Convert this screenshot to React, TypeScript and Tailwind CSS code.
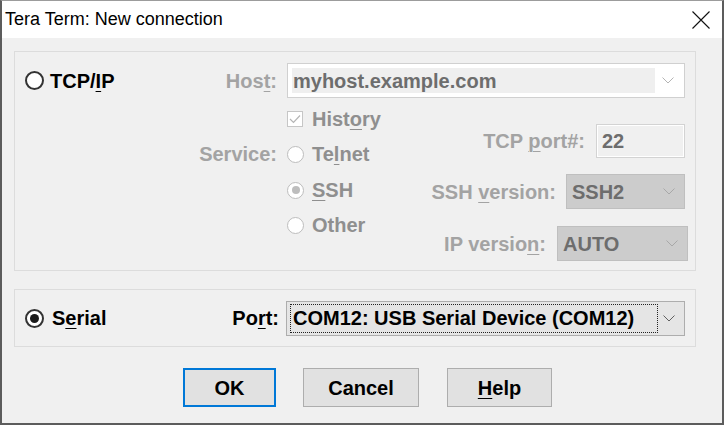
import React from "react";

const GRAY = "text-[#a3a3a3]";

function Chevron({ color = "#a8a8a8" }: { color?: string }) {
  return (
    <svg width="12" height="7" viewBox="0 0 12 7" fill="none">
      <path d="M0.5 0.5L6 6L11.5 0.5" stroke={color} strokeWidth="1" />
    </svg>
  );
}

function Radio({ checked = false }: { checked?: boolean }) {
  return (
    <span className="w-[19px] h-[19px] rounded-full border-2 border-[#333333] bg-white flex items-center justify-center shrink-0">
      {checked && <span className="w-[9px] h-[9px] rounded-full bg-[#1a1a1a]" />}
    </span>
  );
}

function DimRadio({ checked = false }: { checked?: boolean }) {
  return (
    <span className="w-[17px] h-[17px] rounded-full border border-[#bdbdbd] bg-white flex items-center justify-center shrink-0">
      {checked && <span className="w-[8px] h-[8px] rounded-full bg-[#bdbdbd]" />}
    </span>
  );
}

function U({ children }: { children: React.ReactNode }) {
  return <span className="underline underline-offset-[3px] decoration-1">{children}</span>;
}

function DimCombo({ value, width }: { value: string; width: string }) {
  return (
    <div className={`${width} h-[35px] bg-[#cccccc] border border-[#bfbfbf] flex items-center justify-between pl-[5px] pr-[9px] text-[#6d6d6d]`}>
      <span>{value}</span>
      <Chevron />
    </div>
  );
}

export default function App() {
  return (
    <div className="w-[724px] h-[426px] bg-white font-['Liberation_Sans',Arial,sans-serif]">
      <div className="w-[724px] h-[425px] flex flex-col border-x-2 border-b-2 border-[#5c5c5c] border-t border-t-[#9c9c9c]">
        {/* title bar */}
        <div className="h-[37px] bg-white flex items-center justify-between pl-[3px] pr-[12px]">
          <span className="text-[18px] text-black">Tera Term: New connection</span>
          <svg width="18" height="18" viewBox="0 0 18 18" fill="none">
            <path d="M0.5 0.5L17.5 17.5M17.5 0.5L0.5 17.5" stroke="#111" strokeWidth="1.1" />
          </svg>
        </div>

        <div className="flex-1 bg-[#f0f0f0] pl-[12px] pt-[13px] text-[20px] font-bold text-black">
          {/* TCP/IP group */}
          <div className="w-[682px] h-[220px] border border-[#dcdcdc] pl-[10px] pt-[11px] pr-[7px]">
            <div className="flex items-center h-[35px]">
              <div className="w-[252px] flex items-center justify-between">
                <div className="flex items-center gap-[6px]">
                  <Radio />
                  <span>
                    TCP/<U>I</U>P
                  </span>
                </div>
                <span className={GRAY}>
                  Hos<U>t</U>:
                </span>
              </div>
              <div className="ml-[10px] w-[398px] h-[35px] border border-[#d0d0d0] bg-white flex items-center pl-[4px] pr-[10px]">
                <div className="w-[363px] h-[25px] bg-[#efefef] flex items-center pl-[1px] text-[#6d6d6d]">
                  myhost.example.com
                </div>
                <div className="flex-1 flex justify-end">
                  <Chevron color="#b4b4b4" />
                </div>
              </div>
            </div>

            <div className="flex">
              <div className="w-[252px] mt-[44px] h-[24px] flex items-center justify-end">
                <span className={GRAY}>Service:</span>
              </div>
              <div className="ml-[10px] w-[120px] flex flex-col text-[#8f8f8f]">
                <div className="mt-[9px] h-[24px] flex items-center gap-[9px]">
                  <span className="w-[16px] h-[16px] border border-[#c6c6c6] bg-white flex items-center justify-center">
                    <svg width="12" height="10" viewBox="0 0 12 10" fill="none">
                      <path d="M1 5L4.5 8.5L11 1.5" stroke="#b5b5b5" strokeWidth="1.2" />
                    </svg>
                  </span>
                  <span>
                    Hist<U>o</U>ry
                  </span>
                </div>
                <div className="mt-[11px] h-[24px] flex items-center gap-[8px]">
                  <DimRadio />
                  <span>
                    Te<U>l</U>net
                  </span>
                </div>
                <div className="mt-[12px] h-[24px] flex items-center gap-[8px]">
                  <DimRadio checked />
                  <span>
                    <U>S</U>SH
                  </span>
                </div>
                <div className="mt-[11px] h-[24px] flex items-center gap-[8px]">
                  <DimRadio />
                  <span>Other</span>
                </div>
              </div>
              <div className="flex-1 flex flex-col items-end">
                <div className="mt-[26px] h-[34px] flex items-center gap-[11px] mr-[3px]">
                  <span className={GRAY}>
                    TCP <U>p</U>ort#:
                  </span>
                  <div className="w-[89px] h-[34px] border border-[#d3d3d3] bg-[#f0f0f0] shadow-[inset_0_0_0_1px_#ffffff] flex items-center pl-[5px] text-[#6d6d6d]">
                    22
                  </div>
                </div>
                <div className="mt-[16px] flex items-center gap-[10px] mr-[3px]">
                  <span className={GRAY}>
                    SSH <U>v</U>ersion:
                  </span>
                  <DimCombo value="SSH2" width="w-[119px]" />
                </div>
                <div className="mt-[17px] flex items-center gap-[11px]">
                  <span className={GRAY}>
                    IP versio<U>n</U>:
                  </span>
                  <DimCombo value="AUTO" width="w-[131px]" />
                </div>
              </div>
            </div>
          </div>

          {/* Serial group */}
          <div className="mt-[18px] w-[682px] h-[58px] border border-[#dcdcdc] pl-[10px] flex items-center">
            <div className="w-[254px] flex items-center justify-between">
              <div className="flex items-center gap-[8px]">
                <Radio checked />
                <span>
                  S<U>e</U>rial
                </span>
              </div>
              <span>
                Po<U>r</U>t:
              </span>
            </div>
            <div className="ml-[7px] w-[399px] h-[35px] bg-[#e5e5e5] border border-[#adadad] flex items-center pl-[3px] pr-[9px]">
              <div className="w-[368px] h-[29px] border border-dotted border-[#222] flex items-center pl-[2px] whitespace-nowrap">
                COM12: USB Serial Device (COM12)
              </div>
              <div className="flex-1 flex justify-end">
                <Chevron color="#606060" />
              </div>
            </div>
          </div>

          {/* buttons */}
          <div className="mt-[21px] ml-[169px] flex font-bold">
            <button className="w-[93px] h-[39px] bg-[#e1e1e1] border-2 border-[#0078d7]">OK</button>
            <button className="ml-[27px] w-[116px] h-[39px] bg-[#e1e1e1] border border-[#adadad]">Cancel</button>
            <button className="ml-[28px] w-[105px] h-[39px] bg-[#e1e1e1] border border-[#adadad]">
              <U>H</U>elp
            </button>
          </div>
        </div>
      </div>
    </div>
  );
}
